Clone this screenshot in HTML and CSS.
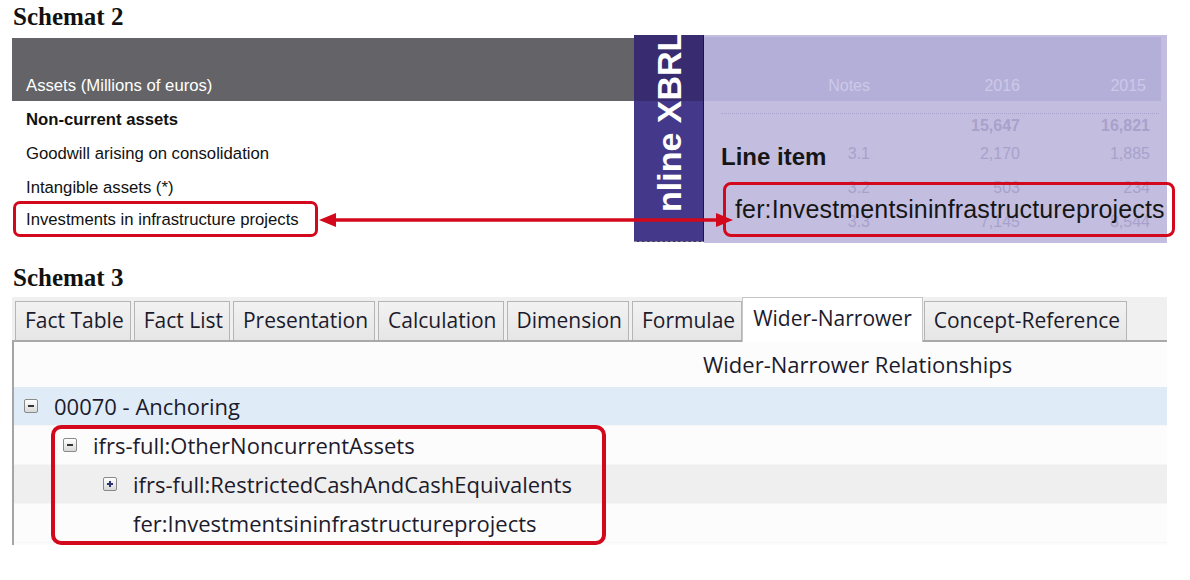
FILE: index.html
```html
<!DOCTYPE html>
<html lang="pl">
<head>
    <meta charset="UTF-8">
    <meta name="viewport" content="width=device-width, initial-scale=1.0">
    <title>Schemat 2 i 3 - Inline XBRL</title>
    <link rel="stylesheet" href="styles.css">
</head>
<body>
<div class="page">

    <!-- Schemat 2: report with inline XBRL tag -->
    <h2 class="fig-title">Schemat 2</h2>
    <div class="fig-report">
        <div class="statement">
            <div class="statement-head">Assets (Millions of euros)</div>
            <div class="statement-row strong">Non-current assets</div>
            <div class="statement-row">Goodwill arising on consolidation</div>
            <div class="statement-row">Intangible assets (*)</div>
            <div class="statement-row marked"><span class="mark">Investments in infrastructure projects</span></div>
        </div>

        <div class="ixbrl-band"><span>nline XBRL</span></div>

        <div class="ixbrl-panel">
            <div class="ghost-head">
                <span>Notes</span><span>2016</span><span>2015</span>
            </div>
            <div class="ghost-row first strong">
                <span></span><span>15,647</span><span>16,821</span>
            </div>
            <div class="ghost-row">
                <span>3.1</span><span>2,170</span><span>1,885</span>
            </div>
            <div class="ghost-row">
                <span>3.2</span><span>503</span><span>234</span>
            </div>
            <div class="ghost-row">
                <span>3.3</span><span>7,145</span><span>8,544</span>
            </div>

            <!-- tag popup over the table -->
            <div class="line-item">
                <div class="line-item-label">Line item</div>
                <div class="line-item-tag">fer:Investmentsininfrastructureprojects</div>
            </div>
        </div>

        <svg class="link-arrow" width="416" height="18" viewBox="0 0 416 18">
            <line x1="14" y1="9" x2="402" y2="9" stroke="#d3081c" stroke-width="3.5"/>
            <polygon points="1,9 18,2 18,16" fill="#d3081c"/>
            <polygon points="415,9 398,2 398,16" fill="#d3081c"/>
        </svg>
    </div>

    <!-- Schemat 3: Arelle style viewer -->
    <h2 class="fig-title second">Schemat 3</h2>
    <div class="viewer">
        <div class="tab-strip">
            <span class="tab">Fact Table</span>
            <span class="tab">Fact List</span>
            <span class="tab">Presentation</span>
            <span class="tab">Calculation</span>
            <span class="tab">Dimension</span>
            <span class="tab">Formulae</span>
            <span class="tab active">Wider-Narrower</span>
            <span class="tab">Concept-Reference</span>
        </div>

        <div class="tree">
            <div class="tree-head">Wider-Narrower Relationships</div>
            <div class="tree-row depth-0 selected">
                <span class="toggle minus"></span>00070 - Anchoring
            </div>
            <div class="tree-row depth-1">
                <span class="toggle minus"></span>ifrs-full:OtherNoncurrentAssets
            </div>
            <div class="tree-row depth-2 shaded">
                <span class="toggle plus"></span>ifrs-full:RestrictedCashAndCashEquivalents
            </div>
            <div class="tree-row depth-2">
                <span class="toggle blank"></span>fer:Investmentsininfrastructureprojects
            </div>
        </div>

        <div class="tree-mark"></div>
    </div>

</div>
</body>
</html>
```

FILE: styles.css
```css
/* Basic Reset */
* {
    margin: 0;
    padding: 0;
    box-sizing: border-box;
}

body {
    background: #fff;
    color: #111;
    font-family: 'Liberation Sans', Arial, sans-serif;
}

.page {
    width: 1190px;
    padding: 3px 0 0 12px;
}

.fig-title {
    font-family: 'Liberation Serif', 'Times New Roman', serif;
    font-size: 25px;
    line-height: 28px;
    font-weight: bold;
    color: #111;
    padding-left: 1px;
}

.fig-title.second {
    margin-top: 19px;
}

/* Schemat 2 */
.fig-report {
    position: relative;
    display: flex;
    margin-top: 4px;
    height: 210px;
}

.statement {
    flex: 0 0 622px;
    padding-top: 3px;
    font-size: 16.7px;
}

.statement-head {
    height: 63px;
    background: #646468;
    color: #fff;
    display: flex;
    align-items: flex-end;
    padding: 0 0 5px 14px;
    line-height: 20px;
}

.statement-row {
    height: 34px;
    line-height: 34px;
    padding-left: 14px;
}

.statement-row.strong {
    font-weight: bold;
    margin-top: 2px;
}

.statement-row.marked {
    padding-left: 1px;
    margin-top: -4px;
}

.mark {
    display: inline-block;
    height: 36px;
    line-height: 32px;
    border: 3px solid #d3081c;
    border-radius: 7px;
    padding: 0 16px 0 10px;
}

/* vertical "Online XBRL" band */
.ixbrl-band {
    flex: 0 0 70px;
    height: 207px;
    background: linear-gradient(to bottom, #392b70 66px, #44388a 66px);
    border-right: 1px solid #1d1d1d;
    border-bottom: 1px dashed #8a8a8a;
    overflow: hidden;
    display: flex;
    justify-content: center;
    padding-bottom: 29px;
}

.ixbrl-band span {
    writing-mode: vertical-rl;
    transform: rotate(180deg);
    color: #fff;
    font-weight: bold;
    font-size: 34px;
    line-height: 40px;
    white-space: nowrap;
}

.ixbrl-panel {
    position: relative;
    flex: 0 0 463px;
    height: 208px;
    background: #c3bedf;
    padding: 2px 6px 0 0;
    font-size: 16px;
}

.ghost-head {
    height: 64px;
    background: #b4afd8;
    color: #cdc8e8;
    display: grid;
    grid-template-columns: 166px 150px 126px;
    align-items: end;
    text-align: right;
    padding-bottom: 5px;
    line-height: 20px;
}

.ghost-row {
    display: grid;
    grid-template-columns: 149px 150px 130px;
    margin-left: 17px;
    margin-right: 2px;
    height: 34px;
    line-height: 34px;
    text-align: right;
    color: #a8a1cc;
}

.ghost-row.first {
    margin-top: 12px;
    height: 24px;
    line-height: 20px;
    padding-top: 2px;
    border-top: 1px dotted #aaa3cf;
}

.ghost-row.strong {
    font-weight: bold;
}

.line-item {
    position: absolute;
    left: 17px;
    top: 104px;
}

.line-item-label {
    font-size: 24px;
    font-weight: bold;
    line-height: 36px;
    color: #161616;
}

.line-item-tag {
    margin: 7px 0 0 2px;
    height: 55px;
    line-height: 49px;
    border: 3px solid #d3081c;
    border-radius: 8px;
    padding: 0 7px 0 9px;
    font-size: 25px;
    letter-spacing: 0.15px;
    color: #161616;
    white-space: nowrap;
}

.link-arrow {
    position: absolute;
    left: 306px;
    top: 176px;
}

/* Schemat 3 */
.viewer {
    position: relative;
    width: 1155px;
    margin-top: 5px;
    font-family: 'Open Sans', 'Noto Sans', sans-serif;
    color: #1c1b2c;
}

.tab-strip {
    display: flex;
    align-items: flex-end;
    gap: 3px;
    height: 45px;
    padding-left: 3px;
    background: #f0f0f0;
    border-bottom: 2px solid #a9a9a9;
}

.tab {
    height: 39px;
    line-height: 37px;
    padding: 0 6px 0 9px;
    border: 1px solid #b5b5b5;
    border-bottom: none;
    background: linear-gradient(to bottom, #f2f2f2, #e6e6e6);
    font-size: 21px;
    white-space: nowrap;
}

.tab.active {
    height: 45px;
    line-height: 41px;
    margin: 0 -2px -2px -3px;
    padding: 0 10px 0 10px;
    background: #fff;
    border-color: #c6c6c6;
    position: relative;
}

.tree {
    border-left: 2px solid #a5a5a5;
    background: #fcfcfc;
    font-size: 22px;
    padding-bottom: 2px;
}

.tree-head {
    height: 45px;
    line-height: 45px;
    padding-left: 689px;
}

.tree-row {
    display: flex;
    align-items: center;
    gap: 16px;
    height: 39px;
    border-bottom: 1px solid #f6f6f6;
    white-space: nowrap;
}

.tree-row.selected {
    background: #dfecf8;
}

.tree-row.shaded {
    background: #efefef;
}

.depth-0 { padding-left: 10px; }
.depth-1 { padding-left: 49px; }
.depth-2 { padding-left: 89px; }

.toggle {
    position: relative;
    flex: 0 0 14px;
    height: 14px;
    border: 1px solid #8a8a8a;
    border-radius: 2px;
    background: linear-gradient(to bottom, #ffffff, #d8d8d8);
}

.toggle::before,
.toggle::after {
    content: "";
    position: absolute;
    background: #333;
}

.toggle.minus::before,
.toggle.plus::before {
    left: 3px;
    top: 5px;
    width: 6px;
    height: 2px;
}

.toggle.plus::before,
.toggle.plus::after {
    background: #2c3370;
}

.toggle.plus::after {
    left: 5px;
    top: 3px;
    width: 2px;
    height: 6px;
}

.toggle.blank {
    visibility: hidden;
}

.tree-mark {
    position: absolute;
    left: 39px;
    top: 128px;
    width: 555px;
    height: 120px;
    border: 4px solid #d3081c;
    border-radius: 10px;
}
```
